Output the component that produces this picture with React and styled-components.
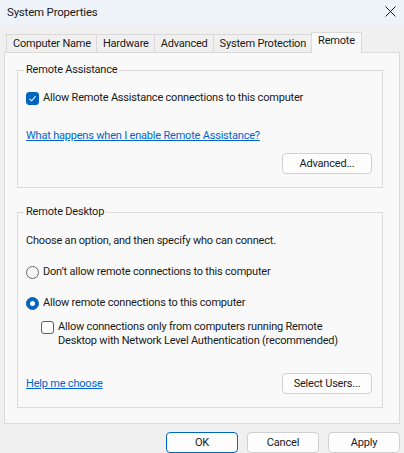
import React, { useState } from "react";
import styled, { createGlobalStyle } from "styled-components";

const GlobalStyle = createGlobalStyle`
  html, body {
    margin: 0;
    padding: 0;
    background: #f0f0f0;
  }
  body {
    font-family: Roboto, "Liberation Sans", Arial, sans-serif;
    font-size: 11px;
    letter-spacing: -0.2px;
    color: #1a1a1a;
  }
  * { box-sizing: border-box; }
`;

const Window = styled.div`
  width: 404px;
  height: 453px;
  background: #f0f0f0;
  display: flex;
  flex-direction: column;
  overflow: hidden;
`;

const TitleBar = styled.div`
  height: 25px;
  flex: none;
  display: flex;
  align-items: center;
  justify-content: space-between;
  padding: 0 7px 2px 7px;
  background: #eef2f9;
  font-size: 11.5px;
`;

const CloseIcon = styled.svg`
  width: 11px;
  height: 11px;
  margin-right: 1px;
`;

const TabStrip = styled.div`
  display: flex;
  align-items: flex-end;
  margin: 7px 0 -1px 6px;
  height: 21px;
  position: relative;
  z-index: 1;
`;

const Tab = styled.div`
  height: ${(p) => (p.$active ? "21px" : "19px")};
  padding: ${(p) => (p.$active ? "1px 6px 0 6px" : "2px 5px 0 6px")};
  margin-left: -1px;
  border: 1px solid #d9d9d9;
  border-bottom: ${(p) => (p.$active ? "none" : "1px solid #d9d9d9")};
  background: ${(p) => (p.$active ? "#f9f9f9" : "#f0f0f0")};
  white-space: nowrap;
  &:first-child { margin-left: 0; }
`;

const Panel = styled.div`
  margin: 0 4px;
  height: 372px;
  background: #f9f9f9;
  border: 1px solid #dcdcdc;
  padding: 1px 16px 0 12px;
`;

const Group = styled.fieldset`
  margin: 8px 0 0 0;
  padding: 0 10px 13px 8px;
  border: 1px solid #dcdcdc;
  min-width: 0;
  & + & { margin-top: 16px; }
`;

const Legend = styled.legend`
  padding: 0 2px;
  margin-left: -2px;
  line-height: 16px;
`;

const Row = styled.label`
  display: flex;
  align-items: ${(p) => (p.$top ? "flex-start" : "center")};
  gap: 4px;
  margin-top: ${(p) => p.$mt || 0}px;
  margin-left: ${(p) => p.$indent || 0}px;
  line-height: 14px;
  white-space: nowrap;
  cursor: default;
`;

const Box = styled.span`
  width: 13px;
  height: 13px;
  flex: none;
  border-radius: 3px;
  display: flex;
  align-items: center;
  justify-content: center;
  background: ${(p) => (p.$on ? "#0067c0" : "#fdfdfd")};
  border: 1px solid ${(p) => (p.$on ? "#0067c0" : "#5f5f5f")};
  margin-top: ${(p) => (p.$top ? "1px" : "0")};
`;

const Radio = styled.span`
  width: 13px;
  height: 13px;
  flex: none;
  border-radius: 50%;
  display: flex;
  align-items: center;
  justify-content: center;
  background: ${(p) => (p.$on ? "#0067c0" : "#f5f5f5")};
  border: 1px solid ${(p) => (p.$on ? "#0067c0" : "#6a6a6a")};
  &::after {
    content: "";
    display: ${(p) => (p.$on ? "block" : "none")};
    width: 5px;
    height: 5px;
    border-radius: 50%;
    background: #ffffff;
  }
`;

const Text = styled.p`
  margin: ${(p) => p.$mt || 0}px 0 0 0;
  line-height: 14px;
`;

const Link = styled.a`
  color: #0066cc;
  text-decoration: underline;
  line-height: 14px;
  cursor: pointer;
`;

const Actions = styled.div`
  display: flex;
  align-items: center;
  justify-content: space-between;
  margin-top: ${(p) => p.$mt || 0}px;
`;

const ButtonRow = styled.div`
  display: flex;
  justify-content: flex-end;
  margin-top: ${(p) => p.$mt || 0}px;
`;

const LinkLine = styled.div`
  margin-top: ${(p) => p.$mt || 0}px;
`;

const Button = styled.button`
  width: ${(p) => p.$w || 90}px;
  height: 21px;
  flex: none;
  font: inherit;
  letter-spacing: inherit;
  color: #1a1a1a;
  background: #fdfdfd;
  border: 1px solid ${(p) => (p.$primary ? "#0067c0" : "#d0d0d0")};
  border-radius: 4px;
  padding: 0;
`;

const Footer = styled.div`
  display: flex;
  justify-content: flex-end;
  gap: 9px;
  padding: 8px 4px 0 0;
`;

const Check = () => (
  <svg width="9" height="9" viewBox="0 0 9 9">
    <path d="M1.5 4.8 L3.6 6.8 L7.6 2.4" fill="none" stroke="#fff" strokeWidth="1.1" />
  </svg>
);

const tabs = ["Computer Name", "Hardware", "Advanced", "System Protection", "Remote"];

export default function App() {
  const [assist, setAssist] = useState(true);
  const [mode, setMode] = useState("allow");
  const [nla, setNla] = useState(false);

  return (
    <>
      <GlobalStyle />
      <Window>
        <TitleBar>
          <span>System Properties</span>
          <CloseIcon viewBox="0 0 11 11">
            <path d="M0.5 0.5 L10.5 10.5 M10.5 0.5 L0.5 10.5" stroke="#1a1a1a" strokeWidth="1" />
          </CloseIcon>
        </TitleBar>

        <TabStrip>
          {tabs.map((t) => (
            <Tab key={t} $active={t === "Remote"}>
              {t}
            </Tab>
          ))}
        </TabStrip>

        <Panel>
          {/* Remote Assistance */}
          <Group>
            <Legend>Remote Assistance</Legend>
            <Row $mt={13} onClick={() => setAssist(!assist)}>
              <Box $on={assist}>{assist && <Check />}</Box>
              Allow Remote Assistance connections to this computer
            </Row>
            <LinkLine $mt={24}>
              <Link>What happens when I enable Remote Assistance?</Link>
            </LinkLine>
            <ButtonRow $mt={10}>
              <Button>Advanced...</Button>
            </ButtonRow>
          </Group>

          {/* Remote Desktop */}
          <Group>
            <Legend>Remote Desktop</Legend>
            <Text $mt={14}>Choose an option, and then specify who can connect.</Text>
            <Row $mt={17} onClick={() => setMode("deny")}>
              <Radio $on={mode === "deny"} />
              Don’t allow remote connections to this computer
            </Row>
            <Row $mt={17} onClick={() => setMode("allow")}>
              <Radio $on={mode === "allow"} />
              Allow remote connections to this computer
            </Row>
            <Row $top $mt={10} $indent={15} onClick={() => setNla(!nla)}>
              <Box $top $on={nla}>{nla && <Check />}</Box>
              <span>
                Allow connections only from computers running Remote
                <br />
                Desktop with Network Level Authentication (recommended)
              </span>
            </Row>
            <Actions $mt={25}>
              <Link>Help me choose</Link>
              <Button>Select Users...</Button>
            </Actions>
          </Group>
        </Panel>

        <Footer>
          <Button $primary $w={72}>OK</Button>
          <Button $w={72}>Cancel</Button>
          <Button $w={72}>Apply</Button>
        </Footer>
      </Window>
    </>
  );
}
